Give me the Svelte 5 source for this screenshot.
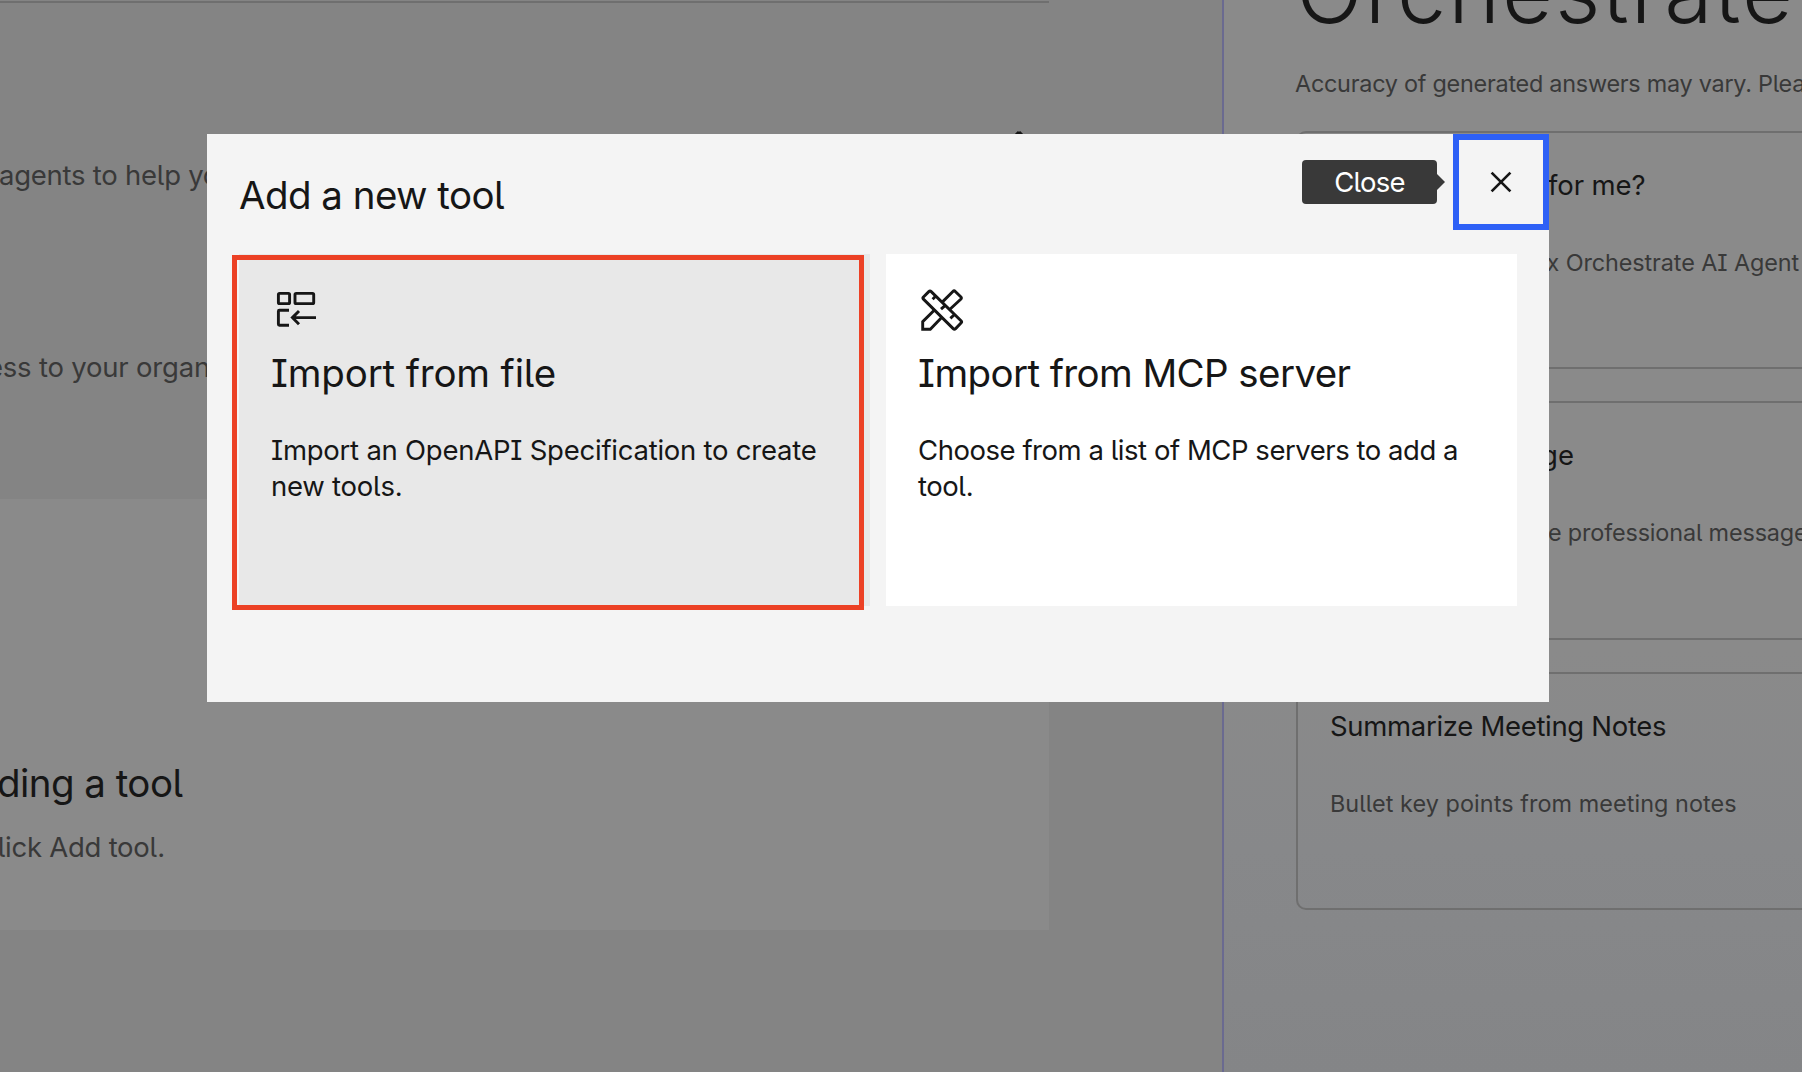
<script>
  const prompts = [
    { title: 'What can you do for me?', text: 'Learn how to use watsonx Orchestrate AI Agent', fit: 'first' },
    { title: 'Draft a Message', text: 'Compose professional message', fit: 'second' },
    { title: 'Summarize Meeting Notes', text: 'Bullet key points from meeting notes', fit: 'third' }
  ];
</script>

<div class="page">
  <main>
    <hr />
    <section class="intro">
      <svg class="chevron" viewBox="0 0 20 12"><path d="M10 1 1 10M10 1l9 9" /></svg>
      <p class="agents">agents to help you</p>
      <p class="access"><span>Access to your organ</span></p>
    </section>
    <section class="empty">
      <h3><span>Start by adding a tool</span></h3>
      <p><span>To begin, click Add tool.</span></p>
    </section>
  </main>

  <aside>
    <h1>Orchestrate</h1>
    <p class="notice">Accuracy of generated answers may vary. Please double-check</p>
    <div class="prompts">
      {#each prompts as p}
        <article class={p.fit}>
          <h4><span>{p.title}</span></h4>
          <p><span>{p.text}</span></p>
        </article>
      {/each}
    </div>
  </aside>

  <div class="modal" role="dialog">
    <header>
      <h2>Add a new tool</h2>
      <div class="tooltip">Close</div>
      <button class="close" aria-label="Close">
        <svg viewBox="0 0 22 22"><path d="M1.6 1.6l18.8 18.8M20.4 1.6L1.6 20.4" /></svg>
      </button>
    </header>
    <div class="tiles">
      <div class="tile selected">
        <svg class="icon" viewBox="0 0 44 44">
          <rect x="7.4" y="9.4" width="11.2" height="10.2" rx="1.2" />
          <rect x="24" y="9.4" width="18.7" height="10.2" rx="1.2" />
          <path d="M18 26.2H8.4a1 1 0 0 0-1 1v13a1 1 0 0 0 1 1H18M45 33.6H22M28 27l-6.6 6.6L28 40.2" />
        </svg>
        <h3>Import from file</h3>
        <p>Import an OpenAPI Specification to create<br />new tools.</p>
      </div>
      <div class="tile">
        <svg class="icon" viewBox="0 0 44 44">
          <path d="M13.2 7.600a1.700 1.700 0 0 0-2.400 0L5.200 13.200a1.200 1.200 0 0 0 0 1.700L35.200 44.600a1.700 1.700 0 0 0 2.400 0L43 39.100a1.700 1.700 0 0 0 0-2.400z" />
          <path d="M24 18.400 34.900 7.500a1.700 1.700 0 0 1 2.400 0L43 13a1.400 1.400 0 0 1 0 2L31.400 25.800M16.700 25.700 4.700 37.700v7.600h7.600l11.800-12.200" />
          <path d="M17.600 12.200 14.600 15.200M27 21.600 23 25.200M36 31 32.400 34.400" />
        </svg>
        <h3 class="mcp">Import from MCP server</h3>
        <p class="choose">Choose from a list of MCP servers to add a<br />tool.</p>
      </div>
    </div>
    <div class="highlight"></div>
  </div>
</div>

<style>
  :global(body) { margin: 0; }
  .page {
    position: relative;
    display: flex;
    width: 1802px;
    height: 1072px;
    overflow: hidden;
    background: #848484;
    color: #161616;
    font-family: Inter, "Liberation Sans", sans-serif;
    font-feature-settings: "cv05", "cv08";
    white-space: nowrap;
  }
  h1, h2, h3, h4, p { margin: 0; font-weight: 400; }
  h2, h3 { font-size: 38.5px; line-height: 48px; }
  h4, p { font-size: 27.5px; line-height: 36px; }
  svg { fill: none; stroke: #161616; }

  main { width: 1222px; padding-top: 1px; box-sizing: border-box; flex: none; }
  hr { width: 1049px; height: 2px; margin: 0; border: 0; background: #6f6f6f; }
  .intro { height: 496px; padding-top: 128px; box-sizing: border-box; color: #393939; }
  .chevron { display: block; width: 20px; height: 12px; margin-left: 1009px; stroke: #161616; stroke-width: 3; }
  .agents { margin: 14px 0 0 -1px; letter-spacing: -0.25px; }
  .access { margin-top: 156px; width: 210px; display: flex; justify-content: flex-end; letter-spacing: -0.2px; }
  .empty { width: 1049px; height: 431px; padding-top: 260px; box-sizing: border-box; background: #8a8a8a; }
  .empty h3 { display: flex; justify-content: flex-end; width: 182.5px; letter-spacing: -0.55px; }
  .empty p { display: flex; justify-content: flex-end; width: 165px; margin-top: 22px; color: #393939; letter-spacing: -0.25px; }

  aside {
    flex: 1;
    min-width: 0;
    padding-left: 72px;
    border-left: 2px solid #6a6a90;
    background: linear-gradient(#8a8a8a 0, #8a8a8a 650px, #87888a 850px, #848587 1072px);
    overflow: hidden;
  }
  h1 { margin-top: -57px; font-size: 88px; line-height: 96px; font-weight: 300; letter-spacing: 2px; }
  .notice { margin: 28.5px 0 0 -1px; font-size: 23.4px; line-height: 32px; letter-spacing: -0.25px; color: #393939; }
  .prompts { display: grid; gap: 32px; margin-top: 31.5px; }
  article {
    width: 620px;
    height: 238px;
    box-sizing: border-box;
    padding: 34px 32px;
    border: 2px solid #6f6f6f;
    border-radius: 10px;
  }
  article h4, article p { display: flex; }
  article p { margin-top: 43.5px; font-size: 23.4px; line-height: 32px; color: #393939; letter-spacing: 0.07px; }
  .first h4 { width: 315.5px; justify-content: flex-end; letter-spacing: -0.1px; }
  .first p { width: 469px; justify-content: flex-end; letter-spacing: -0.1px; }
  .second { height: 239px; }
  .second h4 { width: 244px; justify-content: flex-end; }
  .second p { width: 477.5px; justify-content: flex-end; letter-spacing: -0.15px; }
  .third h4 { letter-spacing: -0.31px; }

  .modal {
    position: absolute;
    left: 207px;
    top: 134px;
    width: 1342px;
    height: 568px;
    background: #f4f4f4;
  }
  header { display: flex; height: 120px; }
  h2 { flex: 1; padding: 37px 0 0 32px; letter-spacing: -0.55px; }
  .tooltip {
    position: relative;
    width: 135px;
    height: 44px;
    margin: 26px 16px 0 0;
    border-radius: 4px;
    background: #393939;
    color: #fff;
    font-size: 27.5px;
    line-height: 44px;
    text-align: center;
    letter-spacing: -0.75px;
  }
  .tooltip::after {
    content: "";
    position: absolute;
    left: 135px;
    top: 14px;
    border: 8px solid transparent;
    border-left-color: #393939;
    border-right: 0;
  }
  .close {
    display: grid;
    place-items: center;
    width: 96px;
    height: 96px;
    padding: 0;
    border: 6px solid #2d60f6;
    background: #f4f4f4;
  }
  .close svg { width: 22px; height: 22px; stroke-width: 2.7; }
  .tiles { display: grid; grid-template-columns: 631px 631px; gap: 16px; padding-left: 32px; }
  .tile { height: 352px; box-sizing: border-box; padding: 30px 32px; background: #fff; }
  .selected { background: #e8e8e8; }
  .icon { display: block; width: 44px; height: 44px; stroke-width: 2.9; overflow: visible; }
  .tile h3 { margin-top: 21px; letter-spacing: -0.17px; }
  .tile p { margin-top: 35px; letter-spacing: -0.24px; }
  .tile h3.mcp { letter-spacing: -0.6px; }
  .tile p.choose { letter-spacing: -0.46px; }
  .highlight {
    position: absolute;
    left: 25px;
    top: 121px;
    width: 632px;
    height: 355px;
    box-sizing: border-box;
    border: 5px solid #ec4125;
  }
</style>
